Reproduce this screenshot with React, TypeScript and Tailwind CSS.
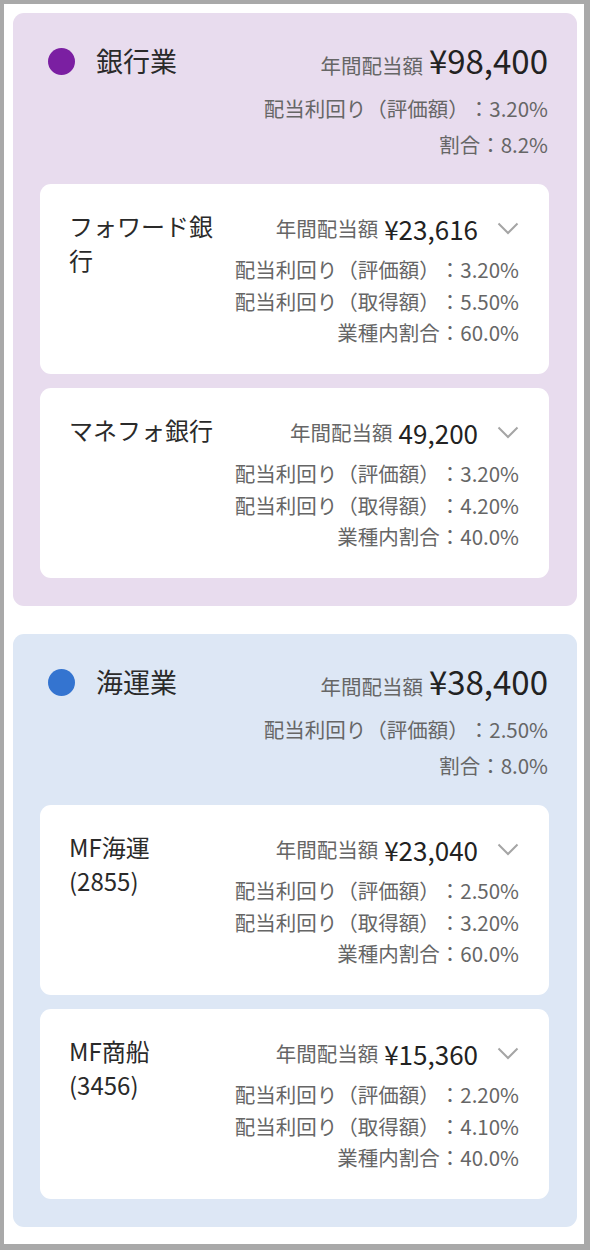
type Stock = {
  name: string;
  amount: string;
  evalYield: string;
  costYield: string;
  share: string;
};

type Sector = {
  title: string;
  dot: string;
  bg: string;
  amount: string;
  evalYield: string;
  share: string;
  stocks: Stock[];
};

const sectors: Sector[] = [
  {
    title: '銀行業',
    dot: 'bg-[#7b1fa2]',
    bg: 'bg-[#e8dcee]',
    amount: '¥98,400',
    evalYield: '3.20%',
    share: '8.2%',
    stocks: [
      { name: 'フォワード銀行', amount: '¥23,616', evalYield: '3.20%', costYield: '5.50%', share: '60.0%' },
      { name: 'マネフォ銀行', amount: '49,200', evalYield: '3.20%', costYield: '4.20%', share: '40.0%' },
    ],
  },
  {
    title: '海運業',
    dot: 'bg-[#3474d0]',
    bg: 'bg-[#dde7f5]',
    amount: '¥38,400',
    evalYield: '2.50%',
    share: '8.0%',
    stocks: [
      { name: 'MF海運 (2855)', amount: '¥23,040', evalYield: '2.50%', costYield: '3.20%', share: '60.0%' },
      { name: 'MF商船 (3456)', amount: '¥15,360', evalYield: '2.20%', costYield: '4.10%', share: '40.0%' },
    ],
  },
];

function Chevron() {
  return (
    <svg width="22" height="13" viewBox="0 0 22 13" fill="none" className="ml-[19px]">
      <polyline points="1.5,1.5 11,11 20.5,1.5" stroke="#a5a5a5" strokeWidth="2" />
    </svg>
  );
}

function StockCard({ stock }: { stock: Stock }) {
  return (
    <div className="bg-white rounded-[11px] h-[190px] pl-[29px] pr-[30px] pt-[25px] flex">
      <div className="w-[150px] text-[24px] leading-[34px] text-[#2a2a2a]">{stock.name}</div>
      <div className="flex-1 flex flex-col items-end">
        <div className="flex items-center h-[38px]">
          <span className="text-[20.5px] text-[#666]">年間配当額</span>
          <span className="text-[26px] text-[#222] ml-[6px]">{stock.amount}</span>
          <Chevron />
        </div>
        <div className="mt-[7px] text-[20.5px] leading-[31.5px] text-[#666] text-right">
          <div>配当利回り（評価額）：{stock.evalYield}</div>
          <div>配当利回り（取得額）：{stock.costYield}</div>
          <div>業種内割合：{stock.share}</div>
        </div>
      </div>
    </div>
  );
}

function SectorBlock({ sector }: { sector: Sector }) {
  return (
    <section className={`${sector.bg} rounded-[11px] pl-[27px] pr-[29px] pt-[28px] pb-[28px]`}>
      <div className="flex items-center justify-between h-[40px] pl-[8px]">
        <div className="flex items-center">
          <span className={`${sector.dot} w-[27px] h-[27px] rounded-full`} />
          <span className="ml-[21px] text-[27px] text-[#2a2a2a]">{sector.title}</span>
        </div>
        <div className="flex items-baseline">
          <span className="text-[20.5px] text-[#666]">年間配当額</span>
          <span className="ml-[6px] text-[33px] text-[#222]">{sector.amount}</span>
        </div>
      </div>
      <div className="mt-[9px] text-[20.5px] leading-[36px] text-[#666] text-right">
        <div>配当利回り（評価額）：{sector.evalYield}</div>
        <div>割合：{sector.share}</div>
      </div>
      <div className="mt-[22px] flex flex-col gap-[14px] -mr-[1px]">
        {sector.stocks.map((s) => (
          <StockCard key={s.name} stock={s} />
        ))}
      </div>
    </section>
  );
}

export default function App() {
  return (
    <div
      className="w-[590px] h-[1250px] bg-white border-[#a9a9a9] border-t-4 border-l-4 border-r-[6px] border-b-[6px] pl-[9px] pr-[7px] pt-[9px] flex flex-col gap-[28px] [text-spacing-trim:space-all]"
      style={{ fontFamily: '"Noto Sans CJK JP", sans-serif' }}
    >
      {sectors.map((s) => (
        <SectorBlock key={s.title} sector={s} />
      ))}
    </div>
  );
}
